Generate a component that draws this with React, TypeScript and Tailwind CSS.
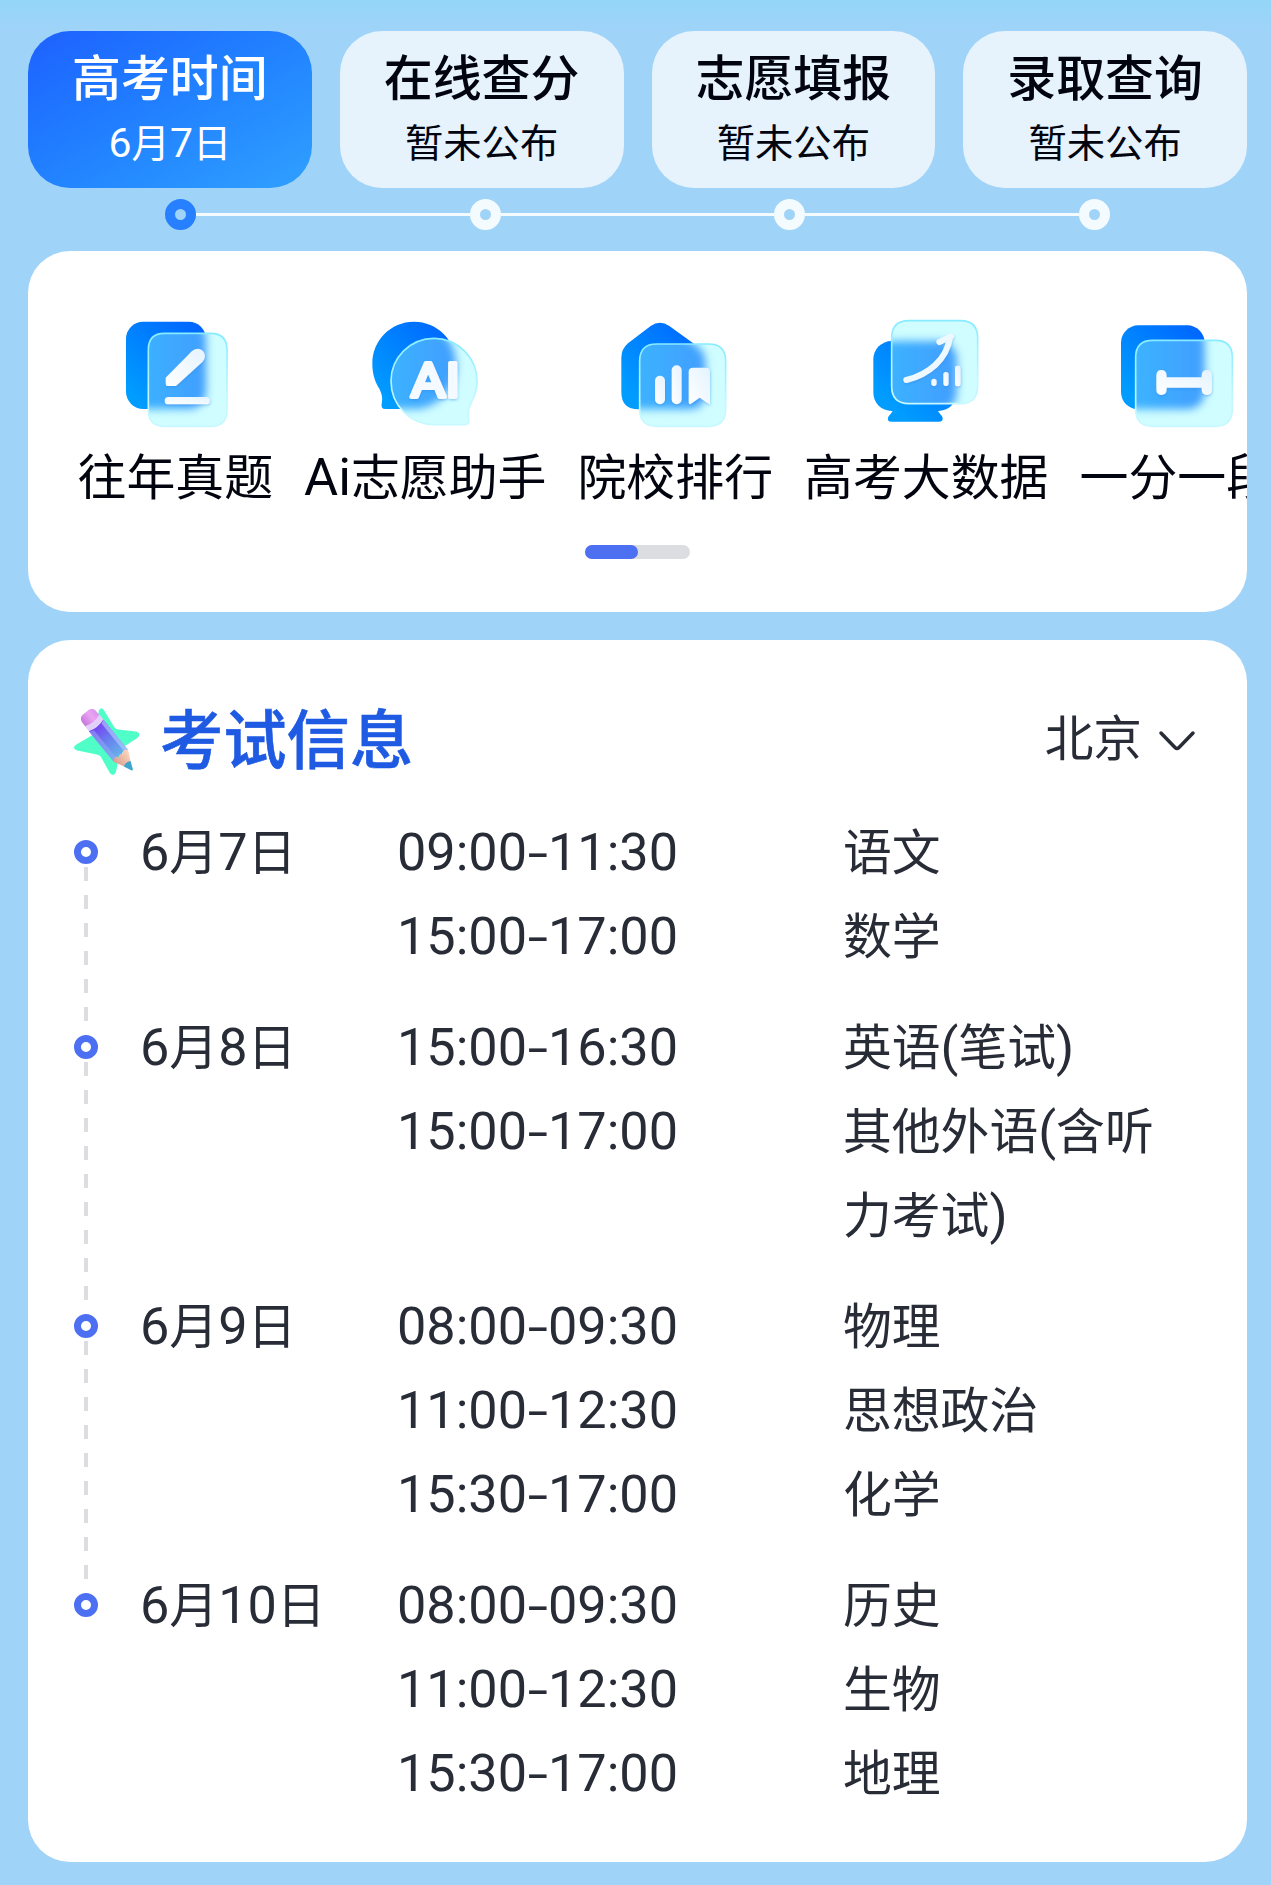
import { useId } from 'react';
import type { ReactNode } from 'react';

const steps = [
  { title: '高考时间', status: '6月7日', active: true },
  { title: '在线查分', status: '暂未公布', active: false },
  { title: '志愿填报', status: '暂未公布', active: false },
  { title: '录取查询', status: '暂未公布', active: false },
];

const schedule = [
  {
    date: '6月7日',
    exams: [
      { time: '09:00-11:30', subject: '语文' },
      { time: '15:00-17:00', subject: '数学' },
    ],
  },
  {
    date: '6月8日',
    exams: [
      { time: '15:00-16:30', subject: '英语(笔试)' },
      { time: '15:00-17:00', subject: '其他外语(含听力考试)' },
    ],
  },
  {
    date: '6月9日',
    exams: [
      { time: '08:00-09:30', subject: '物理' },
      { time: '11:00-12:30', subject: '思想政治' },
      { time: '15:30-17:00', subject: '化学' },
    ],
  },
  {
    date: '6月10日',
    exams: [
      { time: '08:00-09:30', subject: '历史' },
      { time: '11:00-12:30', subject: '生物' },
      { time: '15:30-17:00', subject: '地理' },
    ],
  },
];

// Latin runs are set a little larger than the Chinese text around them
const Mixed = ({ text }: { text: string }) => (
  <>
    {text.split(/([0-9:A-Za-z()]+|-)/).map((part, index) => {
      if (part === '-') {
        return (
          <span key={index} className="inline-block w-[21px] text-center leading-none">
            <span className="inline-block scale-x-150 font-[Roboto] leading-none">-</span>
          </span>
        );
      }
      return index % 2 ? (
        <span key={index} className="text-[1.07em] leading-none font-[Roboto]">{part}</span>
      ) : (
        part
      );
    })}
  </>
);

type GlassIconProps = {
  back: ReactNode;
  front: string;
  viewBox?: string;
  children: ReactNode;
};

const GlassIcon = ({ back, front, viewBox = '0 -1 450 420', children }: GlassIconProps) => {
  const id = useId().replace(/[^a-zA-Z0-9]/g, '');
  return (
    <svg viewBox={viewBox} className="w-[150px] h-[140px] shrink-0">
      <defs>
        <linearGradient id={`${id}b`} gradientUnits="userSpaceOnUse" x1="80" y1="320" x2="310" y2="80">
          <stop offset="0.1" stopColor="#009dff" />
          <stop offset="1" stopColor="#0064ff" />
        </linearGradient>
        <linearGradient id={`${id}s`} x1="0" y1="0" x2="0" y2="1">
          <stop offset="0" stopColor="#87ebff" />
          <stop offset="0.7" stopColor="#c4f7ff" />
          <stop offset="1" stopColor="#c8f8ff" />
        </linearGradient>
        <linearGradient id={`${id}w`} x1="0" y1="1" x2="1" y2="0">
          <stop offset="0" stopColor="#ffffff" />
          <stop offset="1" stopColor="#e4f3ff" />
        </linearGradient>
        <linearGradient id={`${id}o`} gradientUnits="userSpaceOnUse" x1="120" y1="220" x2="330" y2="220">
          <stop offset="0" stopColor="#3cb2ff" />
          <stop offset="1" stopColor="#429dff" />
        </linearGradient>
        <clipPath id={`${id}c`}>
          <path d={front} />
        </clipPath>
        <filter id={`${id}f`} x="-20%" y="-20%" width="140%" height="140%">
          <feGaussianBlur stdDeviation="13" />
        </filter>
        <filter id={`${id}d`} x="-20%" y="-20%" width="140%" height="140%">
          <feDropShadow dx="1" dy="4" stdDeviation="3" floodColor="#2f86dd" floodOpacity="0.4" />
        </filter>
      </defs>
      <g fill={`url(#${id}b)`}>{back}</g>
      <path d={front} fill="#d0fdff" />
      <g clipPath={`url(#${id}c)`}>
        <g fill={`url(#${id}o)`} filter={`url(#${id}f)`}>{back}</g>
      </g>
      <path d={front} fill="none" stroke={`url(#${id}s)`} strokeWidth="5" />
      <g fill={`url(#${id}w)`} filter={`url(#${id}d)`}>{children}</g>
    </svg>
  );
};

const PapersIcon = () => (
  <GlassIcon
    back={<rect x="78" y="64" width="240" height="262" rx="52" />}
    front="M193 99H332Q381 99 381 148V329Q381 378 332 378H194Q145 378 145 329V148Q145 99 193 99Z"
  >
    <path d="M197 232L276 152Q294 138 309 152Q322 167 308 184L228 257H203Q197 257 197 250Z" />
    <rect x="194" y="290" width="136" height="22" rx="11" />
  </GlassIcon>
);

const AssistantIcon = () => (
  <GlassIcon
    back={
      <path d="M192 64C262 64 318 120 318 190C318 265 262 326 192 326H106Q92 326 95 310C99 292 95 280 88 265C74 243 67 218 67 190C67 120 122 64 192 64Z" />
    }
    front="M252 114C323 114 381 172 381 242C381 268 374 288 364 306C356 322 352 335 356 356Q359 373 344 373H252C181 373 123 315 123 242C123 172 181 114 252 114Z"
  >
    <text
      x="182"
      y="290"
      fontSize="146"
      fontWeight="400"
      textLength="148"
      lengthAdjust="spacingAndGlyphs"
      stroke="#f4faff"
      strokeWidth="12"
      strokeLinejoin="round"
      className="font-[Roboto]"
    >
      AI
    </text>
  </GlassIcon>
);

const RankingIcon = () => (
  <GlassIcon
    viewBox="2 -1 450 420"
    back={
      <path d="M154 77Q182 58 210 77L290 135Q318 155 318 185V275Q318 327 266 327H118Q66 327 66 275V172Q66 146 86 129Z" />
    }
    front="M172 131H328Q379 131 379 182V327Q379 378 328 378H172Q121 378 121 327V182Q121 131 172 131Z"
  >
    <rect x="167" y="226" width="30" height="86" rx="15" />
    <rect x="217" y="195" width="30" height="117" rx="15" />
    <path d="M282 202H320Q332 202 332 214V313L301 292L273 312Q268 312 268 306V214Q268 202 282 202Z" />
  </GlassIcon>
);

const BigDataIcon = () => (
  <GlassIcon
    viewBox="6 -1 450 420"
    back={
      <>
        <rect x="73" y="122" width="250" height="210" rx="55" />
        <path d="M130 328V334L118 349Q112 364 128 364H268Q285 364 280 349L268 334V328Z" />
      </>
    }
    front="M180 61H334Q386 61 386 113V258Q386 310 334 310H180Q128 310 128 258V113Q128 61 180 61Z"
  >
    <path
      d="M172 239C240 222 292 178 303 112M271 125L306 108"
      fill="none"
      stroke="#eef8ff"
      strokeWidth="18"
      strokeLinecap="round"
      strokeLinejoin="round"
    />
    <rect x="247" y="235" width="16" height="22" rx="8" />
    <rect x="283" y="215" width="16" height="42" rx="7" />
    <rect x="318" y="196" width="17" height="62" rx="7" />
  </GlassIcon>
);

const SegmentIcon = () => (
  <GlassIcon
    viewBox="12 -1 450 420"
    back={<rect x="69" y="75" width="251" height="252" rx="52" />}
    front="M164 120H352Q403 120 403 171V327Q403 378 352 378H164Q113 378 113 327V171Q113 120 164 120Z"
  >
    <path d="M190 209Q206 209 206 226V231H311V226Q311 209 327 209Q342 209 342 226V267Q342 284 327 284Q311 284 311 267V262H206V267Q206 284 190 284Q175 284 175 267V226Q175 209 190 209Z" />
  </GlassIcon>
);

const PencilIcon = () => (
  <svg viewBox="66 80 210 212" className="mt-[11px] w-[70px] h-[71px] shrink-0">
    <defs>
      <linearGradient id="pencilBody" x1="0" y1="0" x2="0" y2="1">
        <stop offset="0" stopColor="#7542f2" />
        <stop offset="0.5" stopColor="#6883ee" />
        <stop offset="1" stopColor="#65b7e8" />
      </linearGradient>
      <linearGradient id="pencilEraser" x1="0" y1="0" x2="1" y2="0">
        <stop offset="0" stopColor="#c478dc" />
        <stop offset="0.6" stopColor="#eda4f3" />
        <stop offset="1" stopColor="#d894eb" />
      </linearGradient>
      <linearGradient id="pencilWood" x1="0" y1="0" x2="1" y2="0">
        <stop offset="0" stopColor="#d99d91" />
        <stop offset="1" stopColor="#ffd9bc" />
      </linearGradient>
    </defs>
    <path
      d="M147 92Q153 80 162 92L193 143Q197 149 204 150L258 156Q274 161 264 174L219 203Q212 208 210 217L198 277Q192 293 180 281L152 231Q148 226 140 225L82 213Q64 207 78 196L125 168Q132 164 134 156Z"
      fill="#50ffc8"
    />
    <g transform="translate(112 105) rotate(-39)">
      <rect x="-27" y="-8" width="54" height="48" rx="16" fill="url(#pencilEraser)" />
      <path d="M-28 23Q0 34 28 23V48H-28Z" fill="#e2d0fa" />
      <path d="M-28 42Q0 52 28 42V160L12 154L0 162L-12 154L-28 160Z" fill="url(#pencilBody)" />
      <path d="M-28 43Q-20 48 -14 49V155L-28 160Z" fill="#93a9f4" fillOpacity="0.55" />
      <path d="M16 48L28 43V160L16 155Z" fill="#b4c8ff" fillOpacity="0.65" />
      <path d="M-28 160Q-13 144 -8 160Q0 148 8 160Q17 146 28 160L8 199H-8Z" fill="url(#pencilWood)" />
      <path d="M-13 190Q0 182 13 190L3 213Q0 218 -3 213Z" fill="#3ca6cf" />
    </g>
  </svg>
);

const tools = [
  { label: '往年真题', icon: <PapersIcon /> },
  { label: 'Ai志愿助手', icon: <AssistantIcon /> },
  { label: '院校排行', icon: <RankingIcon /> },
  { label: '高考大数据', icon: <BigDataIcon /> },
  { label: '一分一段', icon: <SegmentIcon /> },
];

const Steps = () => (
  <section>
    <div className="grid grid-cols-4 gap-7">
      {steps.map((step) => (
        <div
          key={step.title}
          className={`h-[157px] rounded-[42px] pt-[15px] text-center ${
            step.active
              ? 'bg-linear-to-br from-[#1f60ff] to-[#30a0ff] text-white'
              : 'bg-[#e6f3fd] text-[#02040f]'
          }`}
        >
          <div className="text-[48.9px] leading-[58px] font-medium">{step.title}</div>
          <div className="mt-[15px] text-[38.3px] leading-[44px]">
            <Mixed text={step.status} />
          </div>
        </div>
      ))}
    </div>
    <div className="mt-[11px] grid grid-cols-4">
      {steps.map((step, index) => (
        <div key={step.title} className="flex items-center">
          <div className={`h-[3px] flex-1 ${index > 0 ? 'bg-[#f3fbff]' : ''}`} />
          <div
            className={`size-[31px] rounded-full border-10 ${
              step.active ? 'border-[#2680ff]' : 'border-[#f3fbff]'
            }`}
          />
          <div className={`h-[3px] flex-1 ${index < steps.length - 1 ? 'bg-[#f3fbff]' : ''}`} />
        </div>
      ))}
    </div>
  </section>
);

const Tools = () => (
  <section className="mt-[21px] h-[361px] overflow-hidden rounded-[42px] bg-white pt-[49px]">
    <div className="flex gap-[31px] pl-[49.5px]">
      {tools.map((tool) => (
        <div key={tool.label} className="flex shrink-0 flex-col items-center">
          {tool.icon}
          <span className="mt-[5px] text-[48.9px] leading-[58px] whitespace-nowrap text-[#02040f]">
            <Mixed text={tool.label} />
          </span>
        </div>
      ))}
    </div>
    <div className="mx-auto mt-[42px] h-[14px] w-[105px] rounded-full bg-[#dcdde1]">
      <div className="h-full w-1/2 rounded-full bg-[#4d6ff2]" />
    </div>
  </section>
);

const ExamInfo = () => (
  <section className="mt-7 h-[1222px] rounded-[42px] bg-white pt-[54px] pl-[44px] text-[#282c36]">
    <div className="flex h-[84px] items-center pr-[50px]">
      <PencilIcon />
      <h2 className="ml-[18px] text-[63.3px] leading-[84px] font-medium text-[#1f5ae3] [-webkit-text-stroke:0.6px]">
        考试信息
      </h2>
      <div className="ml-auto flex items-center text-[48.7px]">
        北京
        <svg viewBox="0 0 40 24" className="mt-[11px] ml-[15px] h-6 w-10" fill="none" stroke="currentColor">
          <path d="M4 4L18 18.5Q20 20.5 22 18.5L36 4" strokeWidth="3.5" strokeLinecap="round" />
        </svg>
      </div>
    </div>
    <div className="mt-[29px] flex flex-col gap-[27px]">
      {schedule.map((day, index) => (
        <div key={day.date} className="flex text-[48.8px] leading-[84px]">
          <div className="-mb-[27px] flex w-[28px] flex-col items-center pt-[33px]">
            <div className="size-6 shrink-0 rounded-full border-7 border-[#4d6ff2]" />
            {index < schedule.length - 1 && (
              <div className="mt-[3px] mb-[-19px] w-1 flex-1 bg-[repeating-linear-gradient(#dcdde1_0_14px,transparent_14px_28px)]" />
            )}
          </div>
          <div className="ml-10 w-[257px]">
            <Mixed text={day.date} />
          </div>
          <div className="flex flex-col">
            {day.exams.map((exam) => (
              <div key={exam.time} className="flex">
                <div className="w-[446px] whitespace-nowrap">
                  <Mixed text={exam.time} />
                </div>
                <div className="w-[350px]">
                  <Mixed text={exam.subject} />
                </div>
              </div>
            ))}
          </div>
        </div>
      ))}
    </div>
  </section>
);

const App = () => {
  return (
    <main className="h-[1885px] w-[1271px] overflow-hidden bg-[#a0d3f8] bg-[linear-gradient(#93d6f8,#a0d3f8_32px)] pt-[31px] pr-6 pl-7 font-['Noto_Sans_CJK_SC',sans-serif]">
      <Steps />
      <Tools />
      <ExamInfo />
    </main>
  );
};

export default App;
